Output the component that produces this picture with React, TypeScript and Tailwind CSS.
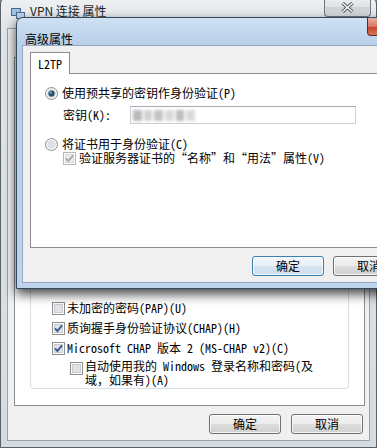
import React from 'react'

// SimSun-like: half-width latin, full-width CJK
const sim =
  "font-['Noto_Sans_Mono_CJK_SC','Noto_Sans_CJK_SC',monospace] text-[12px] leading-[14px] text-black"
const ui = "font-['Noto_Sans_CJK_SC','Noto_Sans',sans-serif] text-[12px]"

const Check = ({checked, disabled}: {checked?: boolean; disabled?: boolean}) => (
  <svg width="13" height="13" viewBox="0 0 13 13" className="shrink-0">
    <rect x="0.5" y="0.5" width="12" height="12" fill="#fcfcfc" stroke={disabled ? '#b8b8b8' : '#8e8f8f'} />
    <rect x="2.5" y="2.5" width="8" height="8" fill={disabled ? '#ececec' : '#e2e3e6'} stroke={disabled ? '#dadada' : '#c9cbd0'} />
    {checked && (
      <path
        d="M3 6.4 L5.4 9 L10 3.4"
        fill="none"
        stroke={disabled ? '#a9a9a9' : '#3d5a95'}
        strokeWidth="1.9"
      />
    )}
  </svg>
)

const Radio = ({checked}: {checked?: boolean}) => (
  <svg width="13" height="13" viewBox="0 0 13 13" className="shrink-0">
    <circle cx="6.5" cy="6.5" r="6" fill="#f6f6f6" stroke="#8f8f8f" />
    <circle cx="6.5" cy="6.5" r="4.2" fill={checked ? '#cfd6dc' : '#dedfe1'} />
    {checked && <circle cx="6.5" cy="6.5" r="3.1" fill="#24506f" />}
    {checked && <circle cx="5.7" cy="5.6" r="1.3" fill="#6f9fc2" />}
  </svg>
)

const Btn = ({label, primary}: {label: string; primary?: boolean}) => (
  <button
    type="button"
    className={`w-[72px] h-[20px] shrink-0 rounded-[3px] border flex items-center justify-center text-black shadow-[inset_0_0_0_1px_rgba(255,255,255,0.75)] ${ui} ${
      primary
        ? 'border-[#3c7fb1] bg-[linear-gradient(#f3f8fc,#e6eff7_50%,#d6e4f0_50%,#cfdeec)]'
        : 'border-[#707070] bg-[linear-gradient(#f3f3f3,#ebebeb_50%,#dddddd_50%,#d0d0d0)]'
    }`}
  >
    {label}
  </button>
)

const App = () => {
  return (
    <div className="relative w-[377px] h-[448px] overflow-hidden bg-[#7d8a96]">
      {/* back window: VPN 连接 属性 */}
      <div className="absolute left-0 top-[-3px] w-[377px] h-[451px] rounded-t-[7px] border border-[#5b6167] bg-[linear-gradient(#eef0f2,#e2e6ea_30px,#d5dbe0)] flex flex-col px-[6px] pb-[6px]">
        <div className="h-[30px] flex items-start pt-[6px] pl-[3px] gap-[4px]">
          <svg width="16" height="16" viewBox="0 0 16 16" className="shrink-0 mt-[1px]">
            <rect x="1.5" y="3.5" width="9" height="7" fill="#9cc3e6" stroke="#4a6a8a" />
            <rect x="6.5" y="7.5" width="8" height="6" fill="#b9d6ef" stroke="#4a6a8a" />
          </svg>
          <span className={`${ui} leading-[14px] text-[#1e1e1e]`}>VPN 连接 属性</span>
        </div>
        <div className="absolute top-0 right-[5px] w-[47px] h-[19px] rounded-b-[4px] border border-t-0 border-[#6f757b] bg-[linear-gradient(#eceef0,#dfe2e5_50%,#cdd2d7_50%,#d9dde1)] flex items-center justify-center">
          <svg width="13" height="11" viewBox="0 0 13 11">
            <path d="M1.5 1 L11.5 10 M11.5 1 L1.5 10" stroke="#55595e" strokeWidth="3.4" />
            <path d="M1.5 1 L11.5 10 M11.5 1 L1.5 10" stroke="#f4f5f6" strokeWidth="1.6" />
          </svg>
        </div>

        <div className="flex-1 flex flex-col bg-[#f0f0f0] border border-[#9aa2aa]">
          <div className="h-[28px]" />
          <div className="flex-1 ml-[6px] mr-[4px] bg-white border border-[#898c95] flex flex-col pt-[15px] px-[15px] pb-[16px]">
            <div className="flex-1 border border-[#d5dfe5] rounded-[3px] flex flex-col justify-end pl-[21px] pb-[1px]">
              <div className="h-[20px] flex items-center gap-[2px]">
                <Check />
                <span className={sim}>未加密的密码(PAP)(U)</span>
              </div>
              <div className="h-[20px] flex items-center gap-[2px]">
                <Check checked />
                <span className={sim}>质询握手身份验证协议(CHAP)(H)</span>
              </div>
              <div className="h-[20px] flex items-center gap-[2px]">
                <Check checked />
                <span className={sim}>Microsoft CHAP 版本 2 (MS-CHAP v2)(C)</span>
              </div>
              <div className="mt-[1px] ml-[18px] flex items-start gap-[2px]">
                <div className="mt-[3px]">
                  <Check />
                </div>
                <span className={sim}>
                  自动使用我的 Windows 登录名称和密码(及
                  <br />
                  域，如果有)(A)
                </span>
              </div>
            </div>
          </div>
          <div className="mt-[8px] mb-[6px] pr-[6px] flex justify-end gap-[10px]">
            <Btn label="确定" />
            <Btn label="取消" />
          </div>
        </div>
      </div>

      {/* front dialog: 高级属性 */}
      <div className="absolute left-[16px] top-[17px] w-[404px] h-[272px] rounded-t-[7px] border border-[#33495f] bg-[linear-gradient(#cfe0f2,#b8cfe9_27px,#bfd4eb)] shadow-[0_5px_12px_rgba(0,0,0,0.75)] flex flex-col px-[5px] pb-[5px]">
        <div className="h-[27px] pl-[3px] pt-[8px]">
          <span className={`${ui} leading-[16px] text-black`}>高级属性</span>
        </div>
        <div className="absolute top-0 left-[350px] w-[44px] h-[18px] rounded-b-[4px] border border-t-0 border-[#6b2418] bg-[linear-gradient(#eab1a4,#d77563_50%,#c6402a_50%,#d5765c)]" />

        <div className="flex-1 bg-[#f0f0f0] border border-[#93a9c1] flex flex-col px-[7px] pt-[6px] pb-[6px]">
          <div className="flex">
            <div className={`relative z-10 -mb-px h-[22px] px-[7px] bg-white border border-b-0 border-[#898c95] flex items-center ${sim}`}>
              L2TP
            </div>
          </div>
          <div className="flex-1 bg-white border border-[#898c95] flex flex-col pt-[12px] pl-[14px]">
            <div className="h-[14px] flex items-center gap-[4px]">
              <Radio checked />
              <span className={sim}>使用预共享的密钥作身份验证(P)</span>
            </div>
            <div className="mt-[6px] ml-[18px] flex items-center">
              <span className={`w-[67px] ${sim}`}>密钥(K):</span>
              <div className="w-[226px] h-[18px] border border-[#c9d0d8] border-t-[#a3abb4] bg-white flex items-center pl-[2px]">
                <div className="flex gap-[2px] blur-[1.5px]">
                  <div className="w-[9px] h-[11px] bg-[#b9b9b9]" />
                  <div className="w-[8px] h-[11px] bg-[#d2d2d2]" />
                  <div className="w-[9px] h-[11px] bg-[#c4c4c4]" />
                  <div className="w-[9px] h-[11px] bg-[#d9d9d9]" />
                  <div className="w-[8px] h-[11px] bg-[#bdbdbd]" />
                  <div className="w-[9px] h-[11px] bg-[#dadada]" />
                </div>
              </div>
            </div>
            <div className="mt-[13px] h-[14px] flex items-center gap-[4px]">
              <Radio />
              <span className={sim}>将证书用于身份验证(C)</span>
            </div>
            <div className="ml-[18px] h-[14px] flex items-center gap-[3px]">
              <Check checked disabled />
              <span className={`${sim} text-[#8d8d8d]`}>验证服务器证书的“名称”和“用法”属性(V)</span>
            </div>
          </div>
          <div className="mt-[8px] flex justify-end gap-[9px] pr-[1px]">
            <Btn label="确定" primary />
            <Btn label="取消" />
          </div>
        </div>
      </div>
    </div>
  )
}

export default App
